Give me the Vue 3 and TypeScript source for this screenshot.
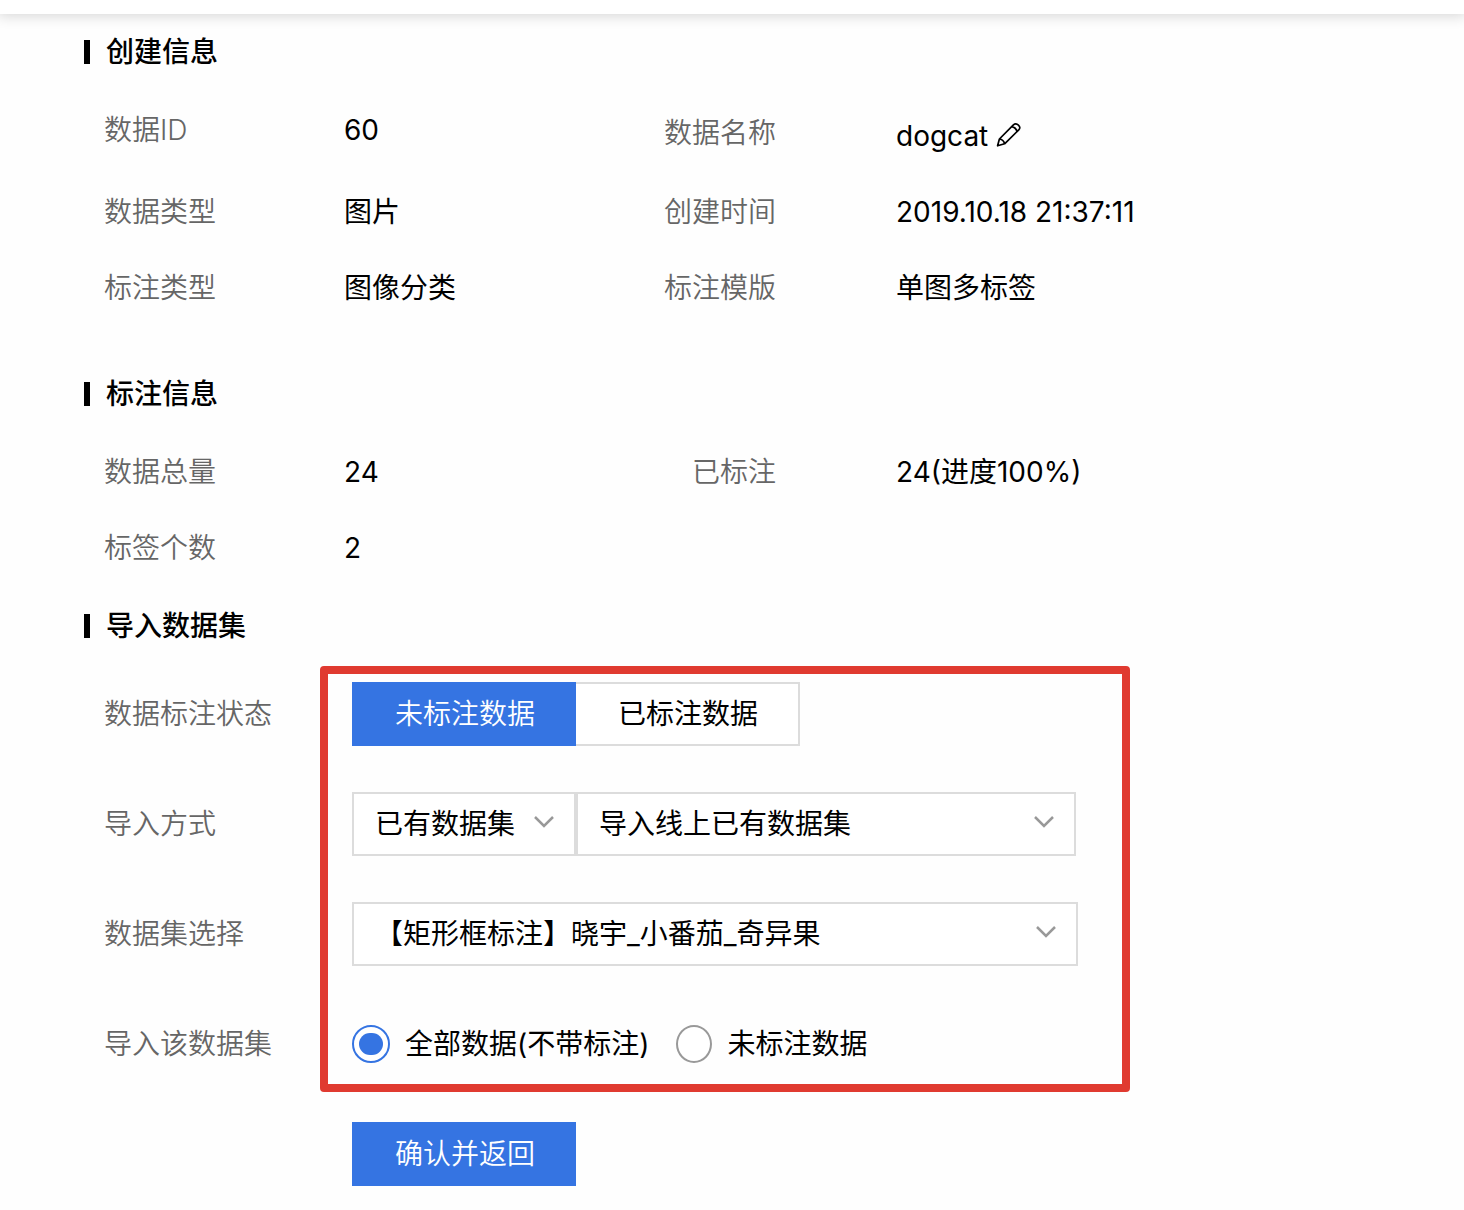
<script setup lang="ts">
import { ref } from 'vue'

interface Field {
  label: string
  value: string
  editable?: boolean
}

const createInfo: Field[] = [
  { label: '数据ID', value: '60' },
  { label: '数据名称', value: 'dogcat', editable: true },
  { label: '数据类型', value: '图片' },
  { label: '创建时间', value: '2019.10.18 21:37:11' },
  { label: '标注类型', value: '图像分类' },
  { label: '标注模版', value: '单图多标签' },
]

const annotationInfo: Field[] = [
  { label: '数据总量', value: '24' },
  { label: '已标注', value: '24(进度100%)' },
  { label: '标签个数', value: '2' },
]

const states = ['未标注数据', '已标注数据']
const scopes = ['全部数据(不带标注)', '未标注数据']

const activeState = ref(states[0])
const scope = ref(scopes[0])
const source = ref('已有数据集')
const method = ref('导入线上已有数据集')
const dataset = ref('【矩形框标注】晓宇_小番茄_奇异果')
</script>

<template>
  <div class="page">
    <header class="topbar"></header>
    <main class="content">
      <section class="block create">
        <h2 class="title">创建信息</h2>
        <dl class="fields">
          <div v-for="f in createInfo" :key="f.label" class="field" :class="{ editable: f.editable }">
            <dt>{{ f.label }}</dt>
            <dd>
              {{ f.value }}
              <button v-if="f.editable" class="edit" type="button" aria-label="编辑">
                <svg width="26" height="26" viewBox="0 0 26 26" fill="none" stroke="#000" stroke-width="1.7" stroke-linejoin="round">
                  <path d="M1.6 22.8 3.4 16 17.4 1.8Q19.8-.2 22.4 2.2T22.8 6.8L8.6 20.8ZM3.4 16Q7.6 16.6 8.6 20.8M15.6 3.6Q20 4.4 21 8.6" />
                </svg>
              </button>
            </dd>
          </div>
        </dl>
      </section>

      <section class="block annotation">
        <h2 class="title">标注信息</h2>
        <dl class="fields">
          <div v-for="f in annotationInfo" :key="f.label" class="field">
            <dt>{{ f.label }}</dt>
            <dd>{{ f.value }}</dd>
          </div>
        </dl>
      </section>

      <section class="block">
        <h2 class="title">导入数据集</h2>
        <form class="form" @submit.prevent>
          <div class="row">
            <span id="state-label" class="label">数据标注状态</span>
            <div class="control" role="group" aria-labelledby="state-label">
              <button
                v-for="s in states"
                :key="s"
                type="button"
                class="btn"
                :class="{ primary: s === activeState }"
                @click="activeState = s"
              >{{ s }}</button>
            </div>
          </div>
          <div class="row">
            <label class="label" for="source">导入方式</label>
            <div class="control">
              <div class="select narrow">
                <select id="source" v-model="source">
                  <option>已有数据集</option>
                </select>
                <svg class="chevron" width="20" height="12" viewBox="0 0 20 12"><path d="M1 1 10 10 19 1" /></svg>
              </div>
              <div class="select medium">
                <select v-model="method" aria-label="导入方式">
                  <option>导入线上已有数据集</option>
                </select>
                <svg class="chevron" width="20" height="12" viewBox="0 0 20 12"><path d="M1 1 10 10 19 1" /></svg>
              </div>
            </div>
          </div>
          <div class="row">
            <label class="label" for="dataset">数据集选择</label>
            <div class="control">
              <div class="select wide">
                <select id="dataset" v-model="dataset">
                  <option>【矩形框标注】晓宇_小番茄_奇异果</option>
                </select>
                <svg class="chevron" width="20" height="12" viewBox="0 0 20 12"><path d="M1 1 10 10 19 1" /></svg>
              </div>
            </div>
          </div>
          <div class="row">
            <span id="scope-label" class="label">导入该数据集</span>
            <div class="control" role="radiogroup" aria-labelledby="scope-label">
              <label v-for="s in scopes" :key="s" class="radio">
                <input v-model="scope" type="radio" name="scope" :value="s" />
                <span>{{ s }}</span>
              </label>
            </div>
          </div>
          <div class="row">
            <span class="label"></span>
            <div class="control">
              <button class="btn primary" type="submit">确认并返回</button>
            </div>
          </div>
          <div class="highlight"></div>
        </form>
      </section>
    </main>
  </div>
</template>

<style>
body {
  margin: 0;
  background: #fefefe;
}
</style>

<style scoped>
.page {
  font-family: Inter, "Noto Sans CJK SC", sans-serif;
  font-size: 28px;
  line-height: 36px;
  color: #000;
}
.topbar {
  height: 14px;
  background: #fff;
  box-shadow: 0 0 14px 2px rgba(0, 0, 0, 0.16);
}
.content {
  padding: 20px 84px 24px;
}
.title {
  display: flex;
  align-items: center;
  gap: 16px;
  margin: 0;
  font-size: 28px;
  font-weight: 500;
}
.title::before {
  content: "";
  width: 6px;
  height: 24px;
  background: #000;
}
.create {
  margin-bottom: 70px;
}
.annotation {
  margin-bottom: 42px;
}
.fields {
  display: grid;
  grid-template-columns: 560px 1fr;
  row-gap: 40px;
  margin: 42px 0 0 20px;
}
.field {
  display: flex;
  align-items: flex-start;
}
.field dt {
  width: 240px;
  color: #666;
  font-weight: 350;
}
.field dd {
  display: flex;
  align-items: center;
  gap: 8px;
  margin: 0;
}
.field:nth-child(even) dt {
  width: 112px;
  margin-right: 120px;
  text-align: right;
}
.editable {
  height: 42px;
  align-items: center;
}
.editable dd {
  align-self: flex-end;
}
.edit {
  display: flex;
  padding: 0;
  border: 0;
  background: none;
  cursor: pointer;
}
.form {
  position: relative;
  display: grid;
  row-gap: 46px;
  margin: 38px 0 0 20px;
}
.row {
  display: flex;
  align-items: center;
  min-height: 64px;
}
.label {
  width: 248px;
  flex: none;
  color: #666;
  font-weight: 350;
}
.control {
  display: flex;
  align-items: center;
  flex: 1;
}
.btn {
  width: 224px;
  height: 64px;
  padding: 0 0 0 2px;
  border: 2px solid #dcdcdc;
  border-left: 0;
  background: #fff;
  color: #000;
  font: inherit;
  cursor: pointer;
}
.btn.primary {
  border: 0;
  background: #3574e2;
  color: #fff;
  font-weight: 350;
}
.select {
  position: relative;
}
.select select {
  width: 100%;
  height: 64px;
  display: block;
  padding: 0 21px;
  border: 2px solid #dcdcdc;
  border-radius: 0;
  appearance: none;
  background: #fff;
  color: #000;
  font: inherit;
}
.narrow {
  width: 224px;
}
.medium {
  width: 500px;
}
.wide {
  width: 726px;
}
.chevron {
  position: absolute;
  right: 22px;
  top: 24px;
  fill: none;
  stroke: #999;
  stroke-width: 2.5;
  pointer-events: none;
}
.radio {
  display: flex;
  align-items: center;
  gap: 15px;
  margin-right: 27px;
}
.radio input {
  display: grid;
  place-items: center;
  width: 36px;
  height: 38px;
  margin: 0;
  border: 2px solid #999;
  border-radius: 50%;
  appearance: none;
  background: #fff;
}
.radio input:checked {
  width: 38px;
  border-color: #3574e2;
}
.radio input:checked::before {
  content: "";
  width: 24px;
  height: 22px;
  border-radius: 11px;
  background: #3574e2;
}
.highlight {
  position: absolute;
  top: -16px;
  bottom: 94px;
  left: 216px;
  width: 794px;
  border: 8px solid #e03a30;
  border-radius: 4px;
  pointer-events: none;
}
</style>
